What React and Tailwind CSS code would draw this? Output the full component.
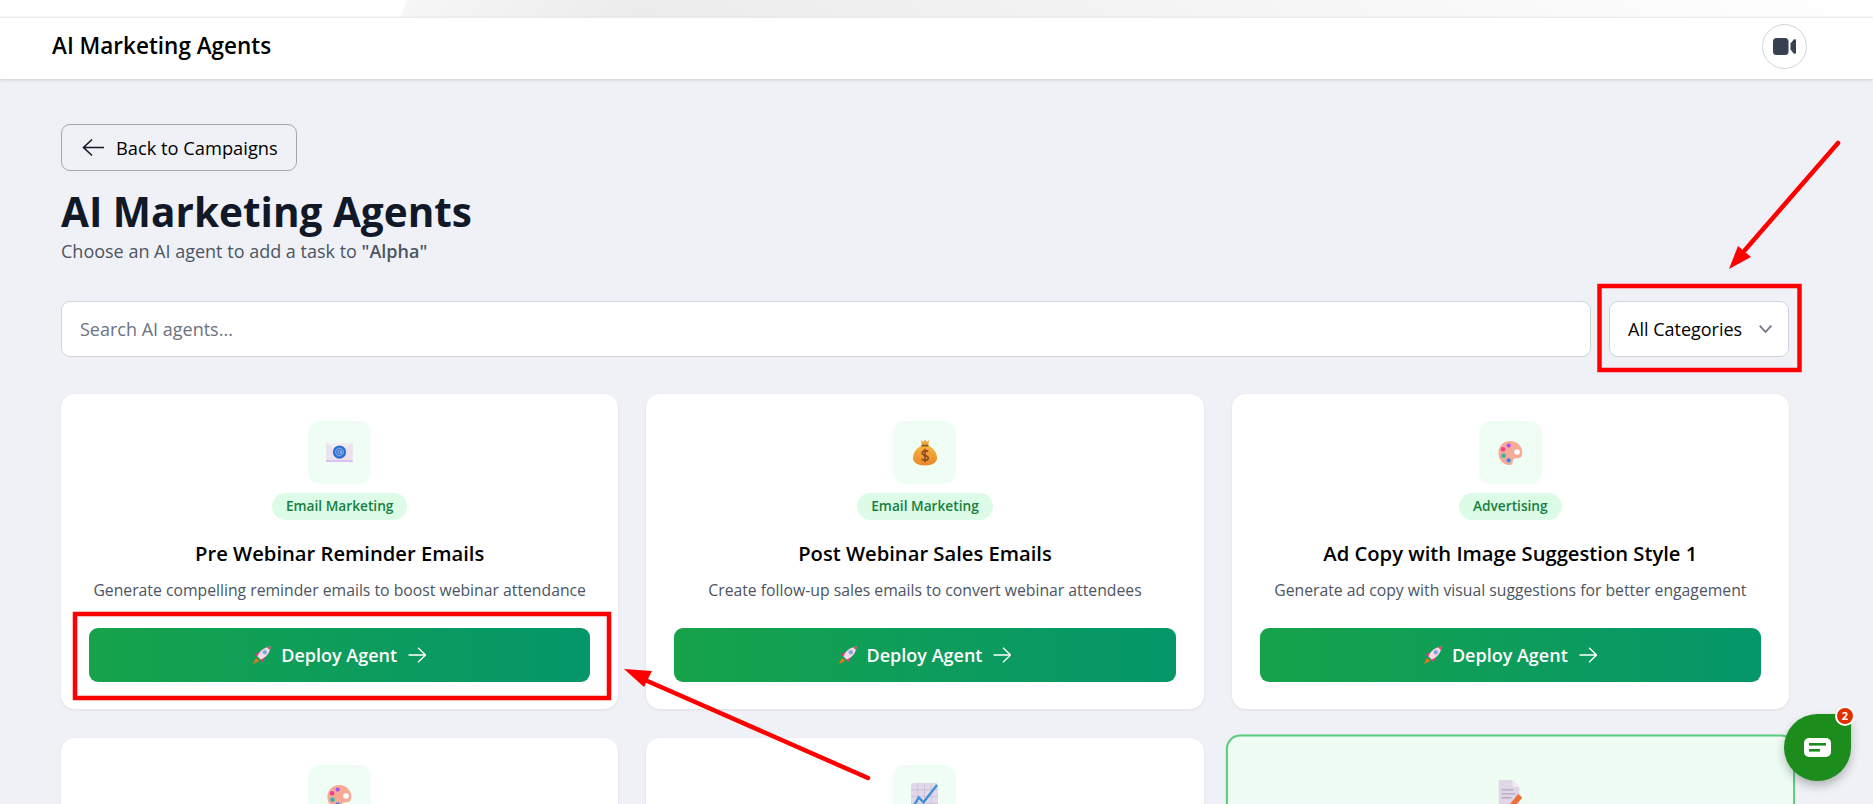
const ROCKET = () => (
  <svg width="18" height="18" viewBox="1 1 18 18" className="shrink-0">
    <path d="M4 13 L1 19 L7 16 Z" fill="#f97316" />
    <path d="M3 9.5 L7.5 7 L6 12.5 Z" fill="#f0357f" />
    <path d="M10.5 17 L13 12.5 L7.5 14 Z" fill="#f0357f" />
    <path d="M5.5 11.5 C7 6.5 11.5 2.5 18.5 1.5 C18 8.5 13.5 13 8.5 14.5 Z" fill="#f3dce8" />
    <path d="M15 2.2 C16.3 1.9 17.4 1.7 18.5 1.5 C18.4 2.7 18.2 4 17.9 5 Z" fill="#f0357f" />
    <circle cx="12.8" cy="7.2" r="2" fill="#6aa6ee" stroke="#b9a9cf" strokeWidth="0.8" />
  </svg>
);

const Envelope = () => (
  <svg width="27" height="19" viewBox="0 0 28 20">
    <rect x="0" y="0" width="28" height="20" fill="#ece2ee" />
    <path d="M0 0 L14 10 L28 0 Z" fill="#f4edf3" />
    <rect x="0" y="18" width="28" height="2" fill="#d9c0ef" />
    <circle cx="14" cy="9.5" r="7" fill="#2f6fd0" />
    <circle cx="14" cy="9.5" r="1.7" fill="none" stroke="#a9c6f0" strokeWidth="0.9" />
    <path d="M18 9.5 A4 4 0 1 0 16.5 12.6 M15.7 8 V10.4 A1.15 1.15 0 0 0 18 10.4 V9.5" fill="none" stroke="#a9c6f0" strokeWidth="0.9" />
  </svg>
);

const MoneyBag = () => (
  <svg width="24" height="27" viewBox="0 0 26 28">
    <defs>
      <linearGradient id="bagFill" x1="0" y1="0" x2="0" y2="1">
        <stop offset="0" stopColor="#f7b53c" />
        <stop offset="1" stopColor="#e9872a" />
      </linearGradient>
    </defs>
    <path d="M8.5 0.5 L11 2.5 L13 0 L15 2.5 L17.5 0.5 L16.5 6 L9.5 6 Z" fill="#eea63a" />
    <path d="M10 6 C3 10 0 15 0 20 C0 25 5 28 13 28 C21 28 26 25 26 20 C26 15 23 10 16 6 Z" fill="url(#bagFill)" />
    <rect x="9" y="5.5" width="8" height="2" rx="1" fill="#8e5a2a" />
    <path d="M16.5 13 C15 11.5 10 11.5 10 14.5 C10 18 16.5 16.5 16.5 20 C16.5 23 11 23 9.5 21 M13 10 L13 24.5" fill="none" stroke="#8e4a22" strokeWidth="1.8" />
  </svg>
);

const Palette = () => (
  <svg width="27" height="26" viewBox="0 0 28 28">
    <path d="M14 1 C6 1 1 7 1 14 C1 21 6 27 13 27 C17 27 16 23 17 21 C18 19 21 20 24 19 C27 18 27 14 26.5 11 C25 5 20 1 14 1 Z" fill="#f6ab96" />
    <circle cx="21" cy="13" r="3" fill="#ffffff" />
    <circle cx="12" cy="6" r="2.3" fill="#a855f7" />
    <circle cx="6" cy="10" r="2.5" fill="#ec3f8d" />
    <circle cx="6.5" cy="17" r="2.5" fill="#38b2ac" />
    <circle cx="12" cy="22" r="2.3" fill="#3b82f6" />
  </svg>
);

const Chart = () => (
  <svg width="27" height="27" viewBox="0 0 28 28">
    <rect width="28" height="28" rx="2.5" fill="#e1d9ea" />
    <path d="M0 7H28M0 14H28M0 21H28M7 0V28M14 0V28M21 0V28" stroke="#c9bdd8" strokeWidth="0.8" />
    <path d="M1 27 L8 15 L13 20 L27 2" fill="none" stroke="#3f8fd8" strokeWidth="2.4" />
  </svg>
);

const Memo = () => (
  <svg width="25" height="30" viewBox="0 0 26 30">
    <path d="M1 0 L15 0 L22 7 L22 30 L1 30 Z" fill="#e0d6e6" />
    <path d="M15 0 L22 7 L15 7 Z" fill="#f0eaf3" />
    <path d="M4 10H16M4 14H18M4 18H14" stroke="#b3a6bd" strokeWidth="1.4" />
    <path d="M11 26 L21 14 L25 18 L15 29 L10 30 Z" fill="#f0703a" />
  </svg>
);

const ArrowRight = () => (
  <svg width="18" height="16" viewBox="0 0 18 16" fill="none" stroke="currentColor" strokeWidth="1.3" className="shrink-0">
    <path d="M0.5 8 H17.5 M10 0.8 L17.5 8 L10 15.2" />
  </svg>
);

const topCards = [
  { icon: <Envelope />, cat: "Email Marketing", title: "Pre Webinar Reminder Emails", desc: "Generate compelling reminder emails to boost webinar attendance" },
  { icon: <MoneyBag />, cat: "Email Marketing", title: "Post Webinar Sales Emails", desc: "Create follow-up sales emails to convert webinar attendees" },
  { icon: <Palette />, cat: "Advertising", title: "Ad Copy with Image Suggestion Style 1", desc: "Generate ad copy with visual suggestions for better engagement" },
];

function Card({ c }) {
  return (
    <div className="flex flex-col items-center rounded-[14px] bg-white px-[28px] pt-[27px] pb-[27px] shadow-[0_1px_3px_rgba(0,0,0,0.08)]">
      <div className="flex h-[63px] w-[63px] items-center justify-center rounded-[12px] bg-[#f0fdf4]">{c.icon}</div>
      <span className="mt-[9px] flex h-[27px] w-fit items-center rounded-full bg-[#dcfce7] px-[14px] text-[13.7px] font-semibold text-[#15803d]">{c.cat}</span>
      <h3 className="mt-[20px] text-[20.2px] leading-[26px] font-semibold text-black">{c.title}</h3>
      <p className="mt-[12px] text-[15.75px] leading-[24px] text-[#4b5563]">{c.desc}</p>
      <button className="mt-[26px] flex h-[54px] w-full items-center justify-center rounded-[9px] bg-gradient-to-r from-[#16a34a] to-[#059669] text-[18px] font-semibold text-white">
        <ROCKET />
        <span className="mr-[11px] ml-[10px]">Deploy Agent</span>
        <ArrowRight />
      </button>
    </div>
  );
}

function PartCard({ icon, selected }) {
  return (
    <div className={selected
      ? "flex h-[315px] scale-[1.022] flex-col items-center rounded-[14px] border-2 border-[#5ccb7c] bg-[#effcf4] pt-[25px]"
      : "flex h-[315px] flex-col items-center rounded-[14px] bg-white pt-[27px] shadow-[0_1px_3px_rgba(0,0,0,0.08)]"}>
      <div className={selected
        ? "flex h-[63px] w-[63px] items-center justify-center rounded-[12px]"
        : "flex h-[63px] w-[63px] items-center justify-center rounded-[12px] bg-[#f0fdf4]"}>{icon}</div>
    </div>
  );
}

export default function App() {
  return (
    <div className="relative h-[804px] overflow-hidden bg-[#f0f1f6] font-['Open_Sans',sans-serif]">
      <div className="h-[17px] bg-[linear-gradient(110deg,#ffffff_21.6%,#f6f6f6_21.7%,#ececec_34%,#ffffff_100%)]" />
      <header className="flex h-[62px] items-center justify-between border-t border-[#ececec] bg-white pr-[66px] pb-[4px] pl-[52px] shadow-[0_1px_3px_rgba(0,0,0,0.15)]">
        <span className="mb-[2px] text-[22.5px] font-semibold text-black">AI Marketing Agents</span>
        <div className="flex h-[45px] w-[45px] items-center justify-center rounded-full border border-[#d1d5db] bg-white">
          <svg width="23" height="17" viewBox="0 0 23 17">
            <rect x="0" y="0" width="15.5" height="17" rx="3.5" fill="#374151" />
            <path d="M17.5 5.5 L20.8 1.6 C21.6 0.8 23 1.2 23 2.2 V14.8 C23 15.8 21.6 16.2 20.8 15.4 L17.5 11.5 Z" fill="#374151" />
          </svg>
        </div>
      </header>
      <main className="pt-[45px] pr-[84px] pl-[61px]">
        <button className="flex h-[47px] items-center gap-[12px] rounded-[9px] border border-[#a3a6b0] pr-[18px] pl-[20px] text-[18.3px] font-medium text-black">
          <svg width="22" height="19" viewBox="0 0 22 19" fill="none" stroke="#111827" strokeWidth="1.6"><path d="M22 9.5 H1.5 M10 1.5 L1.5 9.5 L10 17.5" /></svg>
          Back to Campaigns
        </button>
        <h1 className="mt-[17px] text-[40.5px] leading-[48px] font-bold text-[#111827]">AI Marketing Agents</h1>
        <p className="mt-[1px] text-[18px] leading-[28px] text-[#4b5563]">Choose an AI agent to add a task to <b className="font-semibold">"Alpha"</b></p>
        <div className="mt-[36px] flex gap-[18px]">
          <input placeholder="Search AI agents..." className="h-[56px] flex-1 rounded-[9px] border border-[#d1d5db] bg-white px-[18px] text-[18px] placeholder:text-[#6b7280]" />
          <div className="flex h-[56px] w-[180px] items-center justify-between rounded-[9px] border border-[#d1d5db] bg-white pr-[16px] pl-[18px] text-[18px] text-black">
            All Categories
            <svg width="13" height="8" viewBox="0 0 13 8" fill="none" stroke="#6b7280" strokeWidth="1.7"><path d="M0.7 0.7 L6.5 7 L12.3 0.7" /></svg>
          </div>
        </div>
        <div className="mt-[37px] grid grid-cols-3 gap-x-[28px] gap-y-[29px]">
          {topCards.map((c, i) => <Card key={i} c={c} />)}
          <PartCard icon={<Palette />} />
          <PartCard icon={<Chart />} />
          <PartCard icon={<Memo />} selected />
        </div>
      </main>

      <svg className="pointer-events-none absolute inset-0" width="1873" height="804" viewBox="0 0 1873 804" fill="none">
        <rect x="1599.5" y="286" width="200" height="84" stroke="#ff0000" strokeWidth="4.5" />
        <rect x="75" y="614" width="534" height="84" stroke="#ff0000" strokeWidth="4.5" />
        <path d="M1838 143 L1745 250" stroke="#ff0000" strokeWidth="4.5" strokeLinecap="round" />
        <path d="M1729 269 L1738 246 L1751 257 Z" fill="#ff0000" />
        <path d="M868 778 L645 680" stroke="#ff0000" strokeWidth="4.5" strokeLinecap="round" />
        <path d="M624 669 L652 671 L644 687 Z" fill="#ff0000" />
      </svg>

      <div className="absolute top-[714px] left-[1784px] flex h-[67px] w-[67px] items-center justify-center rounded-[50%_6px_50%_50%] bg-[#1c8c1c] shadow-[0_5px_10px_rgba(0,0,0,0.25)]">
        <svg width="27" height="19" viewBox="0 0 27 19">
          <rect width="27" height="19" rx="5" fill="#ffffff" />
          <rect x="5" y="5" width="17" height="2.6" fill="#1c8c1c" />
          <rect x="5" y="11" width="11" height="2.6" fill="#1c8c1c" />
        </svg>
      </div>
      <div className="absolute top-[706px] left-[1835px] flex h-[20px] w-[20px] items-center justify-center rounded-full border-2 border-white bg-[#e03000] text-[11px] font-bold text-white">2</div>
    </div>
  );
}
